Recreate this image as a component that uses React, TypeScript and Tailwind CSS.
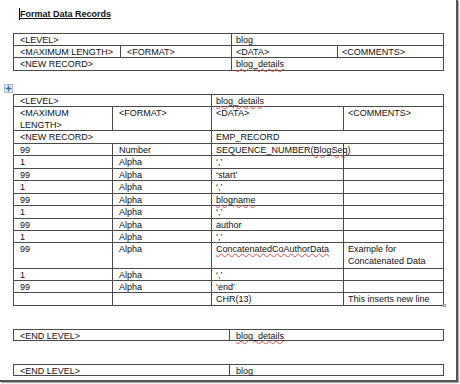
type Cell = { text?: string; span?: number; wavy?: boolean; lines?: string[]; tail?: string }
type Row = { h: number; cells: Cell[] }

const table2Cols = [99, 99, 132, 100]

const table2Rows: Row[] = [
  { h: 12, cells: [{ text: "<LEVEL>", span: 2 }, { text: "blog_details", span: 2, wavy: true }] },
  {
    h: 24,
    cells: [
      { lines: ["<MAXIMUM", "LENGTH>"] },
      { text: "<FORMAT>" },
      { text: "<DATA>" },
      { text: "<COMMENTS>" },
    ],
  },
  { h: 13, cells: [{ text: "<NEW RECORD>", span: 2 }, { text: "EMP_RECORD", span: 2 }] },
  {
    h: 12,
    cells: [{ text: "99" }, { text: "Number" }, { text: "SEQUENCE_NUMBER(", tail: "BlogSeq" }, {}],
  },
  { h: 13, cells: [{ text: "1" }, { text: "Alpha" }, { text: "‘,’" }, {}] },
  { h: 12, cells: [{ text: "99" }, { text: "Alpha" }, { text: "‘start’" }, {}] },
  { h: 13, cells: [{ text: "1" }, { text: "Alpha" }, { text: "‘,’" }, {}] },
  { h: 12, cells: [{ text: "99" }, { text: "Alpha" }, { text: "blogname", wavy: true }, {}] },
  { h: 13, cells: [{ text: "1" }, { text: "Alpha" }, { text: "‘,’" }, {}] },
  { h: 12, cells: [{ text: "99" }, { text: "Alpha" }, { text: "author" }, {}] },
  { h: 12, cells: [{ text: "1" }, { text: "Alpha" }, { text: "‘,’" }, {}] },
  {
    h: 26,
    cells: [
      { text: "99" },
      { text: "Alpha" },
      { text: "ConcatenatedCoAuthorData", wavy: true },
      { lines: ["Example for", "Concatenated Data"] },
    ],
  },
  { h: 12, cells: [{ text: "1" }, { text: "Alpha" }, { text: "‘,’" }, {}] },
  { h: 12, cells: [{ text: "99" }, { text: "Alpha" }, { text: "‘end’" }, {}] },
  { h: 13, cells: [{}, {}, { text: "CHR(13)" }, { text: "This inserts new line" }] },
]

const squiggle =
  "underline decoration-wavy decoration-[#e24a4a] decoration-1 underline-offset-[1px]"

function CellText({ cell }: { cell: Cell }) {
  if (cell.lines) {
    return (
      <>
        {cell.lines.map((l) => (
          <div key={l}>{l}</div>
        ))}
      </>
    )
  }
  if (!cell.text) return null
  if (cell.tail) {
    return (
      <span>
        {cell.text}
        <span className={squiggle}>{cell.tail}</span>)
      </span>
    )
  }
  return <span className={cell.wavy ? squiggle : ""}>{cell.text}</span>
}

function Grid({ cols, rows }: { cols: number[]; rows: Row[] }) {
  const total = cols.reduce((a, b) => a + b, 0)
  return (
    <div className="border-l border-t border-[#4a4a4a]" style={{ width: total + 1 }}>
      {rows.map((row, ri) => {
        let ci = 0
        return (
          <div key={ri} className="flex" style={{ height: row.h }}>
            {row.cells.map((cell, k) => {
              const span = cell.span ?? 1
              const w = cols.slice(ci, ci + span).reduce((a, b) => a + b, 0)
              const pad = ci >= 2 ? 4 : 6
              ci += span
              return (
                <div
                  key={k}
                  className="shrink-0 whitespace-nowrap border-b border-r border-[#4a4a4a] leading-[12px]"
                  style={{ width: w, paddingLeft: pad }}
                >
                  <CellText cell={cell} />
                </div>
              )
            })}
          </div>
        )
      })}
    </div>
  )
}

export default function App() {
  return (
    <div className="h-[384px] w-[460px] overflow-hidden bg-white font-['Liberation_Sans',Arial,sans-serif] text-[9px] text-[#111]">
      <div className="relative h-[382px] w-[458px] border-b-2 border-r-2 border-[#555] bg-white shadow-[1px_1px_1px_#aaa]">
        <div className="relative pl-[20px] pt-[8px]">
          <span className="absolute left-[19px] top-[8px] h-[12px] w-px bg-black" />
          <span className="font-bold leading-[12px] underline underline-offset-[1px]">
            Format Data Records
          </span>
        </div>

        <div className="ml-[13px] mt-[11px]">
          <Grid
            cols={[107, 111, 106, 106]}
            rows={[
              { h: 12, cells: [{ text: "<LEVEL>", span: 2 }, { text: "blog", span: 2 }] },
              {
                h: 12,
                cells: [
                  { text: "<MAXIMUM LENGTH>" },
                  { text: "<FORMAT>" },
                  { text: "<DATA>" },
                  { text: "<COMMENTS>" },
                ],
              },
              {
                h: 13,
                cells: [{ text: "<NEW RECORD>", span: 2 }, { text: "blog_details", span: 2, wavy: true }],
              },
            ]}
          />
        </div>

        <div className="ml-[4px] mt-[13px] flex h-[9px] w-[9px] items-center justify-center border border-[#a9b8cc] bg-[#eef3f9]">
          <svg width="7" height="7" viewBox="0 0 7 7">
            <path d="M3.5 0.5v6M0.5 3.5h6" stroke="#3b6fb6" strokeWidth="1.6" />
          </svg>
        </div>

        <div className="relative ml-[13px] mt-[1px]">
          <Grid cols={table2Cols} rows={table2Rows} />
          <span className="absolute left-[430px] top-[210px] h-[3px] w-[3px] border border-[#999] bg-white" />
        </div>

        <div className="ml-[13px] mt-[23px]">
          <Grid
            cols={[216, 214]}
            rows={[{ h: 11, cells: [{ text: "<END LEVEL>" }, { text: "blog_details", wavy: true }] }]}
          />
        </div>

        <div className="ml-[13px] mt-[23px]">
          <Grid cols={[216, 214]} rows={[{ h: 11, cells: [{ text: "<END LEVEL>" }, { text: "blog" }] }]} />
        </div>
      </div>
    </div>
  )
}
